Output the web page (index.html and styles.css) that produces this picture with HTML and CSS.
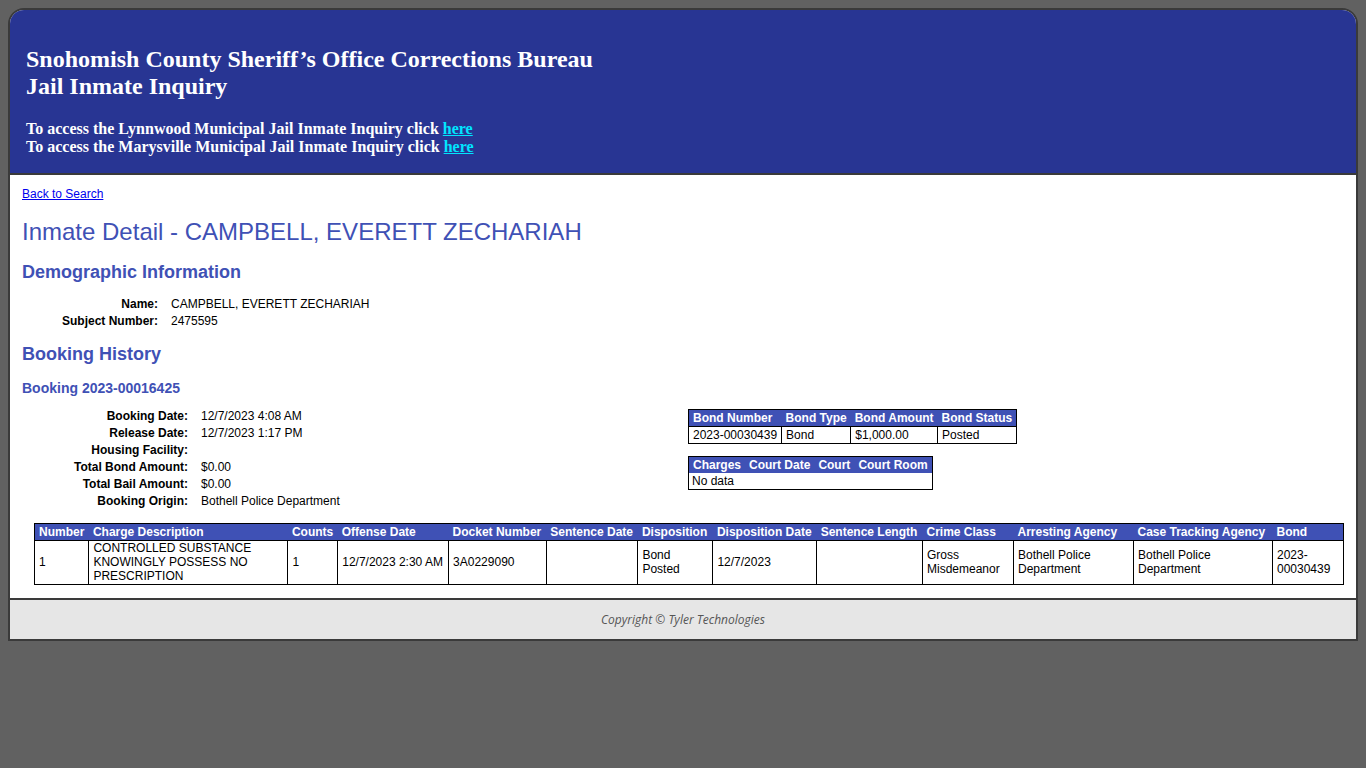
FILE: index.html
```html
<!DOCTYPE html>
<html lang="en">
<head>
<meta charset="UTF-8" />
<meta name="viewport" content="width=device-width, initial-scale=1" />
<title>Jail Inmate Inquiry - Inmate Detail</title>
<link rel="stylesheet" href="styles.css">
</head>
<body>

<div class="page">
  <div class="banner">
    <h1 class="banner-title">Snohomish County Sheriff’s Office Corrections Bureau<br>Jail Inmate Inquiry</h1>
    <p class="banner-links">
      To access the Lynnwood Municipal Jail Inmate Inquiry click <a href="#">here</a><br>
      To access the Marysville Municipal Jail Inmate Inquiry click <a href="#">here</a>
    </p>
  </div>

  <div class="main">
    <a class="back-link" href="#">Back to Search</a>
    <h2 class="page-title">Inmate Detail - CAMPBELL, EVERETT ZECHARIAH</h2>

    <h3 class="section-title">Demographic Information</h3>
    <dl class="fields  fields-demo">
      <dt>Name:</dt><dd>CAMPBELL, EVERETT ZECHARIAH</dd>
      <dt>Subject Number:</dt><dd>2475595</dd>
    </dl>

    <h3 class="section-title">Booking History</h3>
    <h4 class="booking-title">Booking 2023-00016425</h4>

    <div class="booking">
      <dl class="fields  fields-booking">
        <dt>Booking Date:</dt><dd>12/7/2023 4:08 AM</dd>
        <dt>Release Date:</dt><dd>12/7/2023 1:17 PM</dd>
        <dt>Housing Facility:</dt><dd></dd>
        <dt>Total Bond Amount:</dt><dd>$0.00</dd>
        <dt>Total Bail Amount:</dt><dd>$0.00</dd>
        <dt>Booking Origin:</dt><dd>Bothell Police Department</dd>
      </dl>

      <div class="side-tables">
        <table class="grid">
          <tr><th>Bond Number</th><th>Bond Type</th><th>Bond Amount</th><th>Bond Status</th></tr>
          <tr><td>2023-00030439</td><td>Bond</td><td>$1,000.00</td><td>Posted</td></tr>
        </table>
        <table class="grid">
          <tr><th>Charges</th><th>Court Date</th><th>Court</th><th>Court Room</th></tr>
          <tr><td class="empty" colspan="4">No data</td></tr>
        </table>
      </div>
    </div>

    <table class="grid  charges">
      <tr>
        <th>Number</th><th>Charge Description</th><th>Counts</th><th>Offense Date</th>
        <th>Docket Number</th><th>Sentence Date</th><th>Disposition</th><th>Disposition Date</th>
        <th>Sentence Length</th><th>Crime Class</th><th>Arresting Agency</th>
        <th>Case Tracking Agency</th><th>Bond</th>
      </tr>
      <tr>
        <td>1</td>
        <td class="c-desc">CONTROLLED SUBSTANCE KNOWINGLY POSSESS NO PRESCRIPTION</td>
        <td>1</td>
        <td>12/7/2023 2:30 AM</td>
        <td>3A0229090</td>
        <td></td>
        <td class="c-disp">Bond Posted</td>
        <td>12/7/2023</td>
        <td></td>
        <td class="c-class">Gross Misdemeanor</td>
        <td class="c-agency">Bothell Police Department</td>
        <td class="c-agency2">Bothell Police Department</td>
        <td class="c-bond">2023-00030439</td>
      </tr>
    </table>
  </div>

  <div class="footer">Copyright © Tyler Technologies</div>
</div>

</body>
</html>
```

FILE: styles.css
```css
body {
  margin: 8px;
  background: #616161;
  font-family: "Liberation Sans", Arial, sans-serif;
  font-size: 12px;
}

.page {
  border: 2px solid #3a3a3a;
  border-radius: 16px 16px 0 0;
  overflow: hidden;
  background: #fff;
}

/* header */
.banner {
  background: #283593;
  color: #fff;
  padding: 36px 16px 17px;
  border-bottom: 2px solid #3a3a3a;
  font-family: "Liberation Serif", "Times New Roman", serif;
}
.banner-title {
  margin: 0;
  font-size: 24px;
  line-height: 27px;
  font-weight: bold;
}
.banner-links {
  margin: 20px 0 0;
  font-size: 16px;
  line-height: 18px;
  font-weight: bold;
}
.banner-links a {
  color: #00e5ff;
}

/* main content */
.main {
  padding: 12px 12px 13px;
}
.back-link {
  display: block;
  color: #0000ee;
  font-size: 12px;
  line-height: 14px;
}
.page-title {
  margin: 17px 0 0;
  font-size: 24px;
  line-height: 28px;
  font-weight: normal;
  color: #3f51b5;
}
.section-title {
  margin: 16px 0 0;
  font-size: 18px;
  line-height: 21px;
  font-weight: bold;
  color: #3f51b5;
}
.booking-title {
  margin: 15px 0 0;
  font-size: 14px;
  line-height: 16px;
  font-weight: bold;
  color: #3f51b5;
}

.fields {
  display: grid;
  column-gap: 13px;
  margin: 0;
  line-height: 17px;
}
.fields dt {
  text-align: right;
  font-weight: bold;
}
.fields dd {
  margin: 0;
  min-height: 17px;
}
.fields-demo {
  grid-template-columns: 136px auto;
  margin-top: 13px;
}
.fields-demo + .section-title {
  margin-top: 14px;
}
.fields-booking {
  grid-template-columns: 166px auto;
}

.booking {
  display: grid;
  grid-template-columns: 666px auto;
  margin-top: 12px;
}
.side-tables {
  padding-top: 1px;
  display: flex;
  flex-direction: column;
  align-items: flex-start;
  gap: 12px;
}

/* data tables */
.grid {
  border-collapse: collapse;
  border: 1px solid #000;
  font-size: 12px;
}
.grid th {
  background: #3f51b5;
  color: #fff;
  text-align: left;
  font-weight: bold;
  padding: 1px 4px;
  line-height: 14px;
  white-space: nowrap;
}
.grid td {
  border: 1px solid #000;
  padding: 1px 4px;
  line-height: 14px;
}
.grid td.empty {
  border: none;
  padding: 1px 3px;
}

.charges {
  margin: 13px 0 0 12px;
  width: calc(100% - 12px);
}
.charges td {
  padding: 0 4px 1px;
  vertical-align: middle;
}
.charges .c-desc {
  width: 190px;
}
.charges .c-disp {
  width: 66px;
}
.charges .c-class {
  width: 82px;
}
.charges .c-agency {
  width: 111px;
}
.charges .c-agency2 {
  width: 130px;
}
.charges .c-bond {
  width: 62px;
}

/* footer */
.footer {
  border-top: 2px solid #3a3a3a;
  background: #e6e6e6;
  height: 39px;
  line-height: 39px;
  text-align: center;
  font-family: "Open Sans", sans-serif;
  font-style: italic;
  font-size: 12px;
  color: #555;
}
```
